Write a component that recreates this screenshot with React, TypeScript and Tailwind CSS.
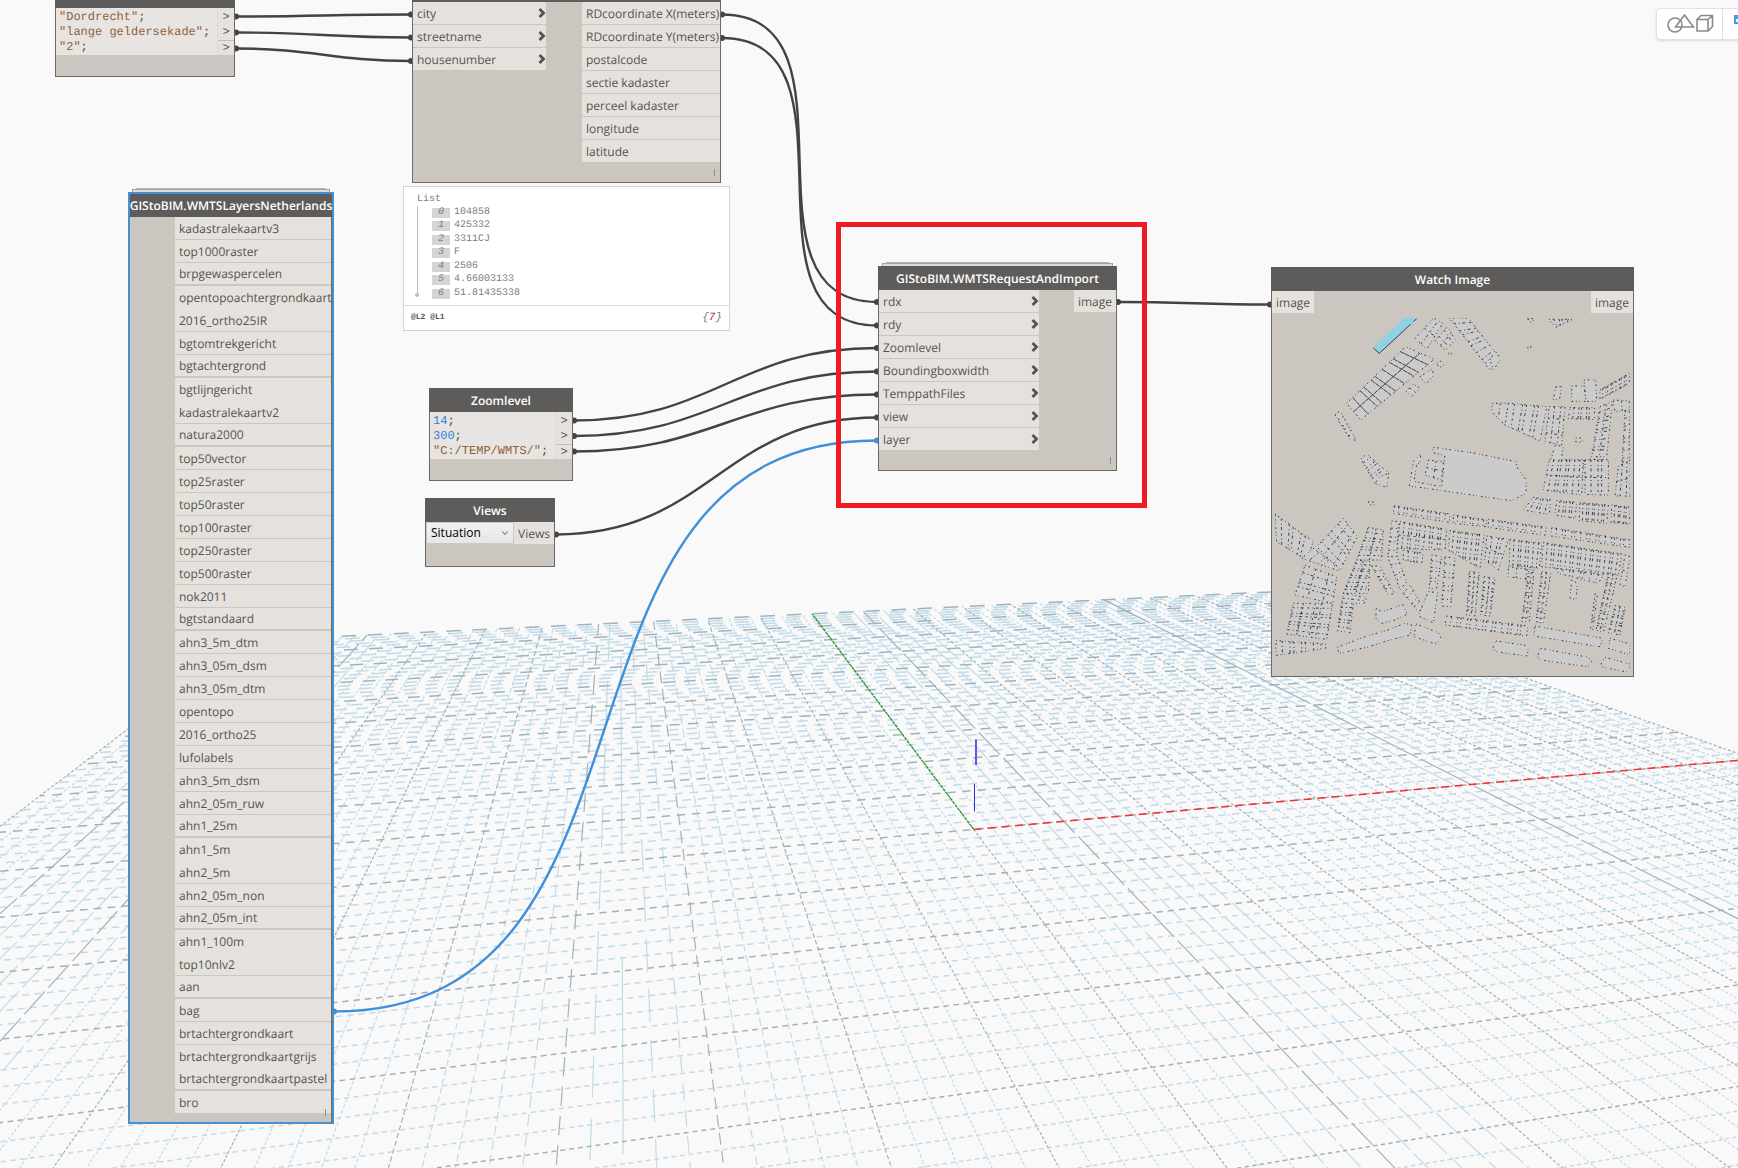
import React from "react";

type Point = [number, number];

/* ---------- Perspective ground grid ---------- */

const HORIZON = 356;

function project(u: number, v: number): Point {
  const w = 1 + 0.017465 * u + 0.08363 * v;
  return [(973.7 + 108.6 * u + 51.81 * v) / w, HORIZON + 473.4 / w];
}

// Nearest v that is still in front of the camera for a given u.
function nearV(u: number) {
  return Math.max(-10, (0.45 - 1 - 0.017465 * u) / 0.08363);
}

function nearU(v: number) {
  return Math.max(-10, (0.45 - 1 - 0.08363 * v) / 0.017465);
}

interface GridLine {
  a: Point;
  b: Point;
  dash: string;
  offset: number;
  width: number;
  major: boolean;
}

function crossLine(v: number, major: boolean): GridLine | null {
  const u0 = nearU(v);
  if (u0 >= 10) return null;
  const a = project(u0, v);
  const b = project(10, v);
  const slope = Math.abs((b[1] - a[1]) / (b[0] - a[0]));
  const period = 1.25 / slope;
  const phase = ((((-a[1] / 1.25) % 1) + 1) % 1) * period;
  return { a, b, dash: `${period * 0.56} ${period * 0.44}`, offset: phase, width: 1.5, major };
}

function depthLine(u: number, major: boolean): GridLine | null {
  const v0 = nearV(u);
  if (v0 >= 10) return null;
  const a = project(u, 10);
  const b = project(u, v0);
  const slope = Math.abs((b[0] - a[0]) / (b[1] - a[1]));
  let period = 5;
  let fill = 0.6;
  if (slope < 0.5) {
    period = Math.min(300, 2.3 / Math.max(slope, 0.004));
    fill = 0.66;
  } else if (Math.abs(slope - 1) < 0.16) {
    period = 36;
    fill = 0.86;
  } else if (Math.abs(slope - 2) < 0.06) {
    period = 60;
    fill = 0.95;
  }
  const phase = (((a[0] / 2.3) % 1) + 1) % 1;
  return { a, b, dash: `${period * fill} ${period * (1 - fill)}`, offset: phase * period, width: 1.2, major };
}

const gridLines: GridLine[] = [];
for (const major of [false, true]) {
  for (let i = -50; i <= 50; i++) {
    if ((i % 5 === 0) !== major) continue;
    for (const line of [crossLine(i / 5, major), depthLine(i / 5, major)]) {
      if (line) gridLines.push(line);
    }
  }
}

function Ground() {
  return (
    <svg className="absolute inset-0 h-full w-full" aria-hidden="true">
      {gridLines.map((l, i) => (
        <line
          key={i}
          x1={l.a[0]}
          y1={l.a[1]}
          x2={l.b[0]}
          y2={l.b[1]}
          stroke={l.major ? "#a3b2ba" : "#c3dbe9"}
          strokeWidth={l.width}
          strokeDasharray={l.dash}
          strokeDashoffset={l.offset}
        />
      ))}
      <line x1="973.7" y1="829.4" x2="812" y2="613.8" stroke="#2f9a2f" strokeWidth="1.3" strokeDasharray="3 1" />
      <line x1="973.7" y1="829.4" x2="1753" y2="759" stroke="#ff2a2a" strokeWidth="1.5" strokeDasharray="8 5.8" />
      <path d="M976 739.500V765" stroke="#5a5af0" strokeWidth="2" />
      <path d="M974.500 784V811.500" stroke="#2a2af0" strokeWidth="1" />
    </svg>
  );
}

/* ---------- Wires ---------- */

const wires: { from: Point; to: Point; blue?: boolean }[] = [
  { from: [236, 16.5], to: [411, 14.5] },
  { from: [236, 32.5], to: [411, 37.5] },
  { from: [236, 48.5], to: [411, 61] },
  { from: [722, 14.5], to: [877, 302] },
  { from: [722, 38], to: [877, 325.5] },
  { from: [574, 420.5], to: [877, 348] },
  { from: [574, 436], to: [877, 371.5] },
  { from: [574, 451.5], to: [877, 394.5] },
  { from: [556, 534.5], to: [877, 417.5] },
  { from: [334, 1011.5], to: [877, 440.5], blue: true },
  { from: [1118, 302], to: [1270, 304.5] },
];

function Wires() {
  return (
    <svg className="absolute inset-0 h-full w-full" aria-hidden="true">
      {wires.map(({ from, to, blue }, i) => {
        const h = 0.45 * Math.hypot(to[0] - from[0], to[1] - from[1]);
        const color = blue ? "#4090d9" : "#444342";
        return (
          <g key={i}>
            <path
              d={`M${from[0]} ${from[1]}C${from[0] + h} ${from[1]} ${to[0] - h} ${to[1]} ${to[0]} ${to[1]}`}
              fill="none"
              stroke={color}
              strokeWidth="2.4"
            />
            <circle cx={from[0]} cy={from[1]} r="3" fill={color} />
            <circle cx={to[0]} cy={to[1]} r="3" fill={color} />
          </g>
        );
      })}
    </svg>
  );
}

/* ---------- Node parts ---------- */

function NodeTitle({ children }: { children?: React.ReactNode }) {
  return (
    <h2 className="flex h-6 items-center justify-center bg-[#5e5c5a] pt-px text-[12px] font-semibold whitespace-nowrap text-white">
      {children}
    </h2>
  );
}

function Stack() {
  return (
    <div className="mx-1">
      <div className="mx-1 h-px bg-[#b4b2ad]" />
      <div className="h-[3px] border border-b-0 border-[#a5a39e] bg-[#e0ddd8]" />
    </div>
  );
}

function Chevron() {
  return (
    <svg width="8" height="10" viewBox="0 0 8 10" aria-hidden="true">
      <path d="M1.500 1l4 4-4 4" fill="none" stroke="#55534f" strokeWidth="2.8" />
    </svg>
  );
}

function InPort({ label }: { label: string }) {
  return (
    <li className="flex h-[22px] items-center justify-between bg-[#e5e2dd] pl-1">
      <span className="pt-0.5">{label}</span>
      <Chevron />
    </li>
  );
}

function OutPort({ label }: { label: string }) {
  return <li className="flex h-[22px] items-center bg-[#e5e2dd] px-1 pt-0.5 whitespace-nowrap">{label}</li>;
}

function Lacing() {
  return <span className="mr-[5px] block h-[7px] w-px self-end bg-[#8b8f92]" />;
}

const nodeBody = "border border-t-0 border-[#6b6965] bg-[#cbc6bf]";

function CodeNode({
  title,
  className,
  lines,
}: {
  title?: string;
  className: string;
  lines: { value: string; tone: string }[];
}) {
  return (
    <section className={`absolute ${className}`}>
      <NodeTitle>{title}</NodeTitle>
      <div className={`flex pb-[21px] ${nodeBody}`}>
        <pre className="grow bg-[#e7e4e1] pt-0.5 pl-[3px] font-['Liberation_Mono',monospace] text-[12px] leading-[15px] text-[#4a4a4a]">
          {lines.map((l) => (
            <div key={l.value}>
              <span className={l.tone}>{l.value}</span>
              <span>;</span>
            </div>
          ))}
        </pre>
        <ul className="w-[17px] border-l border-[#dcd9d4] bg-[#e5e2dd] pt-0.5 font-['Liberation_Mono',monospace] text-[12px]">
          {lines.map((l, i) => (
            <li key={l.value} className={`h-[15px] text-center leading-[15px] ${i === 2 ? "border-t border-[#c3beb7]" : ""}`}>
              &gt;
            </li>
          ))}
        </ul>
      </div>
    </section>
  );
}

/* ---------- Layer list ---------- */

const layers = [
  "kadastralekaartv3", "top1000raster", "brpgewaspercelen", "opentopoachtergrondkaart", "2016_ortho25IR",
  "bgtomtrekgericht", "bgtachtergrond", "bgtlijngericht", "kadastralekaartv2", "natura2000", "top50vector",
  "top25raster", "top50raster", "top100raster", "top250raster", "top500raster", "nok2011", "bgtstandaard",
  "ahn3_5m_dtm", "ahn3_05m_dsm", "ahn3_05m_dtm", "opentopo", "2016_ortho25", "lufolabels", "ahn3_5m_dsm",
  "ahn2_05m_ruw", "ahn1_25m", "ahn1_5m", "ahn2_5m", "ahn2_05m_non", "ahn2_05m_int", "ahn1_100m", "top10nlv2",
  "aan", "bag", "brtachtergrondkaart", "brtachtergrondkaartgrijs", "brtachtergrondkaartpastel", "bro",
];
const joined = new Set(["opentopoachtergrondkaart", "bgtlijngericht", "ahn1_5m", "ahn1_100m", "brtachtergrondkaartgrijs"]);
const wideGap = new Set(["brpgewaspercelen", "bgtachtergrond", "natura2000", "bgtstandaard", "ahn1_25m", "ahn2_05m_int", "aan", "brtachtergrondkaartpastel"]);

function LayersNode() {
  return (
    <section className="absolute top-[188px] left-[128px] w-[206px]">
      <Stack />
      <div className="border-2 border-[#4490d3] bg-[#cbc6bf]">
        <h2 className="flex h-[23px] items-center justify-center bg-[#5e5c5a] text-[12px] font-semibold whitespace-nowrap text-white">
          GIStoBIM.WMTSLayersNetherlands
        </h2>
        <div className="flex flex-col border-r border-[#6b6965] pb-2 pl-[45px]">
          <ul>
            {layers.map((name) => (
              <li
                key={name}
                className={`flex h-[23px] items-center border-[#cbc6bf] bg-[#e5e2dd] pt-px pl-1 whitespace-nowrap ${
                  joined.has(name) ? "" : wideGap.has(name) ? "border-b-2" : "border-b"
                }`}
              >
                {name}
              </li>
            ))}
          </ul>
        </div>
      </div>
      <span className="absolute right-2 bottom-2 h-[7px] w-px bg-[#8b8f92]" />
    </section>
  );
}

/* ---------- Address node and its preview ---------- */

function AddressNode() {
  return (
    <section className="absolute -top-[22px] left-[412px] w-[309px]">
      <NodeTitle />
      <div className={nodeBody}>
        <div className="flex items-start justify-between">
          <ul className="flex w-[133px] flex-col gap-px">
            {["city", "streetname", "housenumber"].map((p) => (
              <InPort key={p} label={p} />
            ))}
          </ul>
          <ul className="flex w-[138px] flex-col gap-px">
            {["RDcoordinate X(meters)", "RDcoordinate Y(meters)", "postalcode", "sectie kadaster", "perceel kadaster", "longitude", "latitude"].map((p) => (
              <OutPort key={p} label={p} />
            ))}
          </ul>
        </div>
        <div className="flex h-5 flex-col justify-center">
          <Lacing />
        </div>
      </div>
    </section>
  );
}

function PreviewPanel() {
  const values = ["104858", "425332", "3311CJ", "F", "2506", "4.66003133", "51.81435338"];
  return (
    <section className="absolute top-[186px] left-[403px] w-[327px] border border-[#d4d4d4] bg-white font-['Liberation_Mono',monospace] text-[10px] text-[#7c7c7c]">
      <div className="px-[13px] pt-[7px] pb-2">
        <h3 className="h-3 text-[10px] leading-3">List</h3>
        <div className="relative flex h-[91px] border-l border-[#bdbdbd] pl-[14px]">
          <span className="absolute bottom-0 -left-[3px] h-[4px] w-[4px] rounded-full bg-[#bdbdbd]" />
          <ol className="flex h-[94px] flex-col justify-between">
            {values.map((v, i) => (
              <li key={v} className="flex h-[13px] items-center gap-1">
                <span className="w-[18px] bg-[#d4d4d4] text-center leading-[10px] italic">{i}</span>
                <span>{v}</span>
              </li>
            ))}
          </ol>
        </div>
      </div>
      <footer className="flex h-[25px] items-center justify-between border-t border-[#dcdcdc] px-[7px]">
        <span className="text-[8px] font-bold text-[#555]">@L2 @L1</span>
        <span className="text-[11px] text-[#777] italic">
          {"{"}
          <b className="font-normal text-[#a02020]">7</b>
          {"}"}
        </span>
      </footer>
    </section>
  );
}

/* ---------- Views and request nodes ---------- */

function ViewsNode() {
  return (
    <section className="absolute top-[498px] left-[425px] w-[130px]">
      <NodeTitle>Views</NodeTitle>
      <div className={`flex pb-[22px] ${nodeBody}`}>
        <div className="relative grow">
          <select
            aria-label="View"
            className="h-[22px] w-full appearance-none border border-[#c9c9c9] bg-linear-to-b from-[#f2f2f2] to-[#e6e6e6] pl-1 text-[12px] text-black"
          >
            <option>Situation</option>
          </select>
          <svg className="pointer-events-none absolute top-[9px] right-[6px]" width="6" height="5" viewBox="0 0 6 5" aria-hidden="true">
            <path d="M0.5 0.5L3 3.5 5.5 0.5" fill="none" stroke="#555" />
          </svg>
        </div>
        <ul className="w-10">
          <OutPort label="Views" />
        </ul>
      </div>
    </section>
  );
}

function RequestNode() {
  return (
    <section className="absolute top-[262px] left-[878px] w-[239px]">
      <Stack />
      <NodeTitle>GIStoBIM.WMTSRequestAndImport</NodeTitle>
      <div className={nodeBody}>
        <div className="flex items-start justify-between">
          <ul className="flex w-[160px] flex-col gap-px">
            {["rdx", "rdy", "Zoomlevel", "Boundingboxwidth", "TemppathFiles", "view", "layer"].map((p) => (
              <InPort key={p} label={p} />
            ))}
          </ul>
          <ul>
            <OutPort label="image" />
          </ul>
        </div>
        <div className="flex h-5 flex-col justify-center">
          <Lacing />
        </div>
      </div>
    </section>
  );
}

/* ---------- Building footprint map ---------- */

interface Block {
  p: number[];
  nx?: number;
  ny?: number;
}

const blocks: Block[] = [
  { p: [260, 430, 437, 260, 522, 298, 302, 480], nx: 10, ny: 2 },
  { p: [465, 235, 522, 174, 548, 190, 500, 268], nx: 2, ny: 2 },
  { p: [525, 242, 562, 200, 586, 240, 556, 270], nx: 3, ny: 2 },
  { p: [568, 174, 625, 174, 720, 295, 690, 330], ny: 9 },
  { p: [690, 300, 705, 272, 722, 298, 700, 330] },
  { p: [438, 395, 460, 372, 480, 385, 455, 408], nx: 2 },
  { p: [480, 350, 515, 328, 522, 345, 498, 372] },
  { p: [530, 310, 542, 303, 550, 315, 538, 323] },
  { p: [565, 280, 572, 276, 576, 282, 569, 287] },
  { p: [225, 465, 240, 452, 288, 540, 272, 540], ny: 5 },
  { p: [803, 176, 825, 176, 818, 184, 810, 186] },
  { p: [867, 178, 938, 178, 910, 192, 886, 202], nx: 5 },
  { p: [802, 262, 812, 258, 813, 265, 806, 268] },
  { p: [888, 380, 905, 380, 898, 420, 880, 418] },
  { p: [935, 378, 972, 378, 978, 424, 935, 424] },
  { p: [972, 360, 1007, 360, 1010, 424, 978, 424] },
  { p: [1020, 390, 1108, 340, 1108, 370, 1020, 418], nx: 11 },
  { p: [697, 430, 745, 430, 735, 495, 695, 455], nx: 2 },
  { p: [745, 430, 860, 440, 840, 543, 735, 495], nx: 6 },
  { p: [868, 440, 915, 440, 905, 555, 855, 545], nx: 3, ny: 3 },
  { p: [930, 443, 1003, 443, 1003, 478, 925, 476], nx: 6 },
  { p: [1020, 440, 1057, 425, 1040, 590, 995, 590], nx: 2, ny: 9 },
  { p: [1060, 420, 1108, 423, 1108, 450, 1065, 455], nx: 2 },
  { p: [1095, 455, 1108, 455, 1108, 628, 1085, 628], ny: 9 },
  { p: [947, 534, 967, 534, 965, 547, 947, 545] },
  { p: [885, 555, 910, 560, 900, 625, 870, 610] },
  { p: [915, 600, 985, 600, 980, 630, 910, 625], nx: 5 },
  { p: [990, 598, 1045, 600, 1045, 625, 985, 625], nx: 4 },
  { p: [303, 597, 320, 582, 386, 640, 345, 670], ny: 6 },
  { p: [386, 640, 380, 682, 345, 670, 360, 650] },
  { p: [325, 725, 345, 727, 340, 736, 328, 733] },
  { p: [520, 562, 635, 578, 768, 605, 770, 620, 798, 660, 798, 700, 755, 722, 670, 710, 500, 685, 448, 678, 460, 605, 482, 582, 480, 610, 470, 612, 462, 665, 545, 680, 555, 585, 518, 578] },
  { p: [505, 600, 550, 605, 545, 660, 495, 645], nx: 2, ny: 2 },
  { p: [403, 738, 570, 762, 568, 787, 400, 760], nx: 12 },
  { p: [580, 765, 680, 780, 678, 800, 580, 790], nx: 8 },
  { p: [685, 778, 858, 802, 855, 826, 685, 802], nx: 12 },
  { p: [875, 803, 1110, 840, 1108, 862, 873, 828], nx: 16 },
  { p: [820, 712, 872, 720, 868, 763, 790, 750], nx: 5 },
  { p: [890, 722, 950, 727, 945, 775, 885, 765], nx: 6 },
  { p: [960, 728, 1045, 735, 1040, 790, 958, 782], nx: 9 },
  { p: [1055, 735, 1110, 742, 1108, 792, 1053, 787], nx: 6 },
  { p: [868, 600, 970, 600, 965, 705, 850, 690], nx: 8, ny: 2 },
  { p: [975, 600, 1045, 600, 1045, 705, 975, 703], nx: 4, ny: 2 },
  { p: [1075, 620, 1110, 600, 1110, 708, 1065, 708], nx: 3, ny: 2 },
  { p: [45, 762, 160, 845, 140, 900, 50, 845], nx: 6 },
  { p: [250, 775, 292, 830, 240, 930, 170, 860], nx: 3, ny: 5 },
  { p: [160, 865, 240, 925, 236, 932, 125, 895], nx: 5 },
  { p: [135, 916, 230, 950, 218, 1030, 105, 1005], nx: 3, ny: 4 },
  { p: [100, 1030, 218, 1030, 200, 1138, 80, 1122], nx: 4, ny: 7 },
  { p: [48, 1142, 197, 1152, 197, 1165, 48, 1186], nx: 8 },
  { p: [325, 802, 370, 810, 365, 900, 290, 900], nx: 2, ny: 7 },
  { p: [290, 900, 330, 905, 325, 1000, 250, 1000], nx: 2, ny: 9 },
  { p: [250, 1000, 320, 1014, 312, 1030, 245, 1030], ny: 2 },
  { p: [245, 1030, 280, 1030, 270, 1118, 232, 1112], ny: 7 },
  { p: [335, 918, 360, 918, 403, 1000, 385, 1005], ny: 6 },
  { p: [395, 783, 415, 785, 410, 890, 383, 890], ny: 5 },
  { p: [383, 890, 412, 890, 440, 965, 420, 990], ny: 4 },
  { p: [430, 1000, 450, 975, 490, 1045, 475, 1055], ny: 4 },
  { p: [420, 785, 560, 808, 555, 870, 412, 865], nx: 11, ny: 2 },
  { p: [430, 870, 490, 880, 485, 910, 430, 900], nx: 4 },
  { p: [515, 885, 545, 890, 530, 985, 508, 985], ny: 6 },
  { p: [505, 995, 533, 998, 520, 1088, 475, 1068] },
  { p: [570, 812, 672, 825, 660, 925, 565, 870], nx: 9 },
  { p: [555, 890, 585, 895, 572, 1040, 545, 1038], ny: 7 },
  { p: [628, 935, 658, 938, 645, 1068, 620, 1065], nx: 2, ny: 9 },
  { p: [672, 950, 705, 955, 690, 1068, 662, 1065], nx: 2, ny: 8 },
  { p: [680, 828, 745, 838, 715, 930, 675, 900], nx: 4, ny: 2 },
  { p: [750, 838, 845, 850, 838, 925, 748, 915], nx: 8 },
  { p: [745, 920, 820, 930, 815, 960, 745, 950], nx: 3 },
  { p: [805, 935, 822, 938, 808, 1085, 785, 1085], nx: 2, ny: 10 },
  { p: [850, 848, 1085, 882, 1075, 945, 845, 920], nx: 20 },
  { p: [890, 925, 1030, 945, 1015, 970, 895, 940], nx: 8 },
  { p: [845, 935, 872, 940, 850, 1090, 828, 1085], nx: 2, ny: 10 },
  { p: [935, 960, 952, 970, 948, 1018, 930, 1015] },
  { p: [1045, 940, 1072, 945, 1030, 1118, 1008, 1110], nx: 2, ny: 14 },
  { p: [1095, 885, 1110, 890, 1095, 980, 1080, 975], ny: 2 },
  { p: [1065, 1037, 1095, 1042, 1080, 1125, 1045, 1118], nx: 2, ny: 7 },
  { p: [1005, 1000, 1012, 1005, 998, 1110, 992, 1105], ny: 6 },
  { p: [348, 1045, 365, 1056, 428, 1034, 442, 1062, 405, 1080, 365, 1090, 348, 1076] },
  { p: [232, 1162, 310, 1132, 390, 1108, 435, 1090, 455, 1095, 450, 1125, 390, 1140, 320, 1162, 237, 1180] },
  { p: [468, 1092, 535, 1118, 542, 1132, 530, 1150, 515, 1148, 462, 1130] },
  { p: [560, 1068, 803, 1098, 800, 1128, 555, 1095], nx: 16 },
  { p: [825, 1098, 1028, 1135, 1020, 1160, 1005, 1158, 822, 1128] },
  { p: [708, 1143, 795, 1156, 805, 1170, 800, 1188, 708, 1175, 698, 1165] },
  { p: [842, 1165, 985, 1192, 995, 1205, 982, 1220, 842, 1200, 832, 1190] },
  { p: [1050, 1135, 1110, 1152, 1110, 1185, 1045, 1165] },
  { p: [1035, 1192, 1110, 1212, 1110, 1238, 1030, 1222, 1023, 1212] },
];

function divisions({ p, nx = 1, ny = 1 }: Block): string {
  const [ax, ay, bx, by, cx, cy, dx, dy] = p;
  const mix = (m: number, n: number, t: number) => Math.round(m + (n - m) * t);
  // Uneven plot widths: each boundary leans a little off the regular spacing.
  const lean = (i: number, n: number) => (i + (((i * 7) % 5) - 2) * 0.12) / n;
  let d = "";
  for (let i = 1; i < nx; i++) {
    const t = lean(i, nx);
    d += `M${mix(ax, bx, t)} ${mix(ay, by, t)}L${mix(dx, cx, t)} ${mix(dy, cy, t)}`;
  }
  for (let i = 1; i < ny; i++) {
    const t = lean(i, ny);
    d += `M${mix(ax, dx, t)} ${mix(ay, dy, t)}L${mix(bx, cx, t)} ${mix(by, cy, t)}`;
  }
  return d;
}

function FootprintMap() {
  return (
    <svg viewBox="45 174 1065 1062" className="block w-full" role="img" aria-label="Building footprints">
      {blocks.map((b, i) => (
        <g key={i} stroke="#1f1d1c">
          <polygon points={b.p.join(" ")} fill="#cbcbcb" strokeWidth="2.6" strokeDasharray="3 8 5 12 2 7" />
          <path d={divisions(b)} fill="none" strokeDasharray={i === 0 ? "14 2" : "6 9 3 7 9 11"} strokeWidth="2.4" />
        </g>
      ))}
      <path d="M340 262L432 174H472L358 280Z" fill="#92d0e3" />
      <path d="M470 176L358 280L340 264" fill="none" stroke="#33414a" strokeWidth="3" />
      <path d="M448 190l12-6 4 14-8-2z" fill="#92d0e3" />
    </svg>
  );
}

function WatchImageNode() {
  return (
    <section className="absolute top-[267px] left-[1271px] w-[363px]">
      <NodeTitle>Watch Image</NodeTitle>
      <div className={nodeBody}>
        <ul className="flex justify-between">
          <OutPort label="image" />
          <OutPort label="image" />
        </ul>
        <div className="px-[3px] pt-[5px] pb-1">
          <FootprintMap />
        </div>
      </div>
    </section>
  );
}

/* ---------- View toggle ---------- */

function ViewToggle() {
  return (
    <div className="absolute top-2 -right-[18px] flex h-8 rounded-sm border border-[#e2e2e2] bg-white shadow-sm">
      <button type="button" aria-label="Geometry view" className="flex w-[66px] items-center justify-center border-r border-[#dedede]">
        <svg width="48" height="20" viewBox="0 0 48 20" fill="none" stroke="#8a8a8a" strokeWidth="1.6" aria-hidden="true">
          <circle cx="9" cy="11" r="7" />
          <path d="M18.500 1L9.500 13H27.500Z" />
          <path d="M31 5.500H42V17H31ZM31 5.500L35 1.500H46.500V12.500L42 17M42 5.500L46.500 1.500" />
        </svg>
      </button>
      <button type="button" aria-label="Graph view" className="flex w-8 items-start pt-[6px] pl-[11px]">
        <svg width="20" height="18" viewBox="0 0 20 18" fill="none" stroke="#3f9df0" strokeWidth="2" aria-hidden="true">
          <path d="M1 1H9V8H1ZM1 3H9M9 5H18" />
        </svg>
      </button>
    </div>
  );
}

export default function App() {
  return (
    <main className="relative h-screen overflow-hidden bg-[#f9f9f9] font-['Open_Sans',sans-serif] text-[12px] leading-4 text-[#555350] [text-rendering:geometricPrecision]">
      <Ground />
      <Wires />
      <CodeNode
        className="-top-4 left-[55px] w-[180px]"
        lines={[
          { value: '"Dordrecht"', tone: "text-[#8f5f3a]" },
          { value: '"lange geldersekade"', tone: "text-[#8f5f3a]" },
          { value: '"2"', tone: "text-[#8f5f3a]" },
        ]}
      />
      <AddressNode />
      <PreviewPanel />
      <LayersNode />
      <CodeNode
        title="Zoomlevel"
        className="top-[388px] left-[429px] w-[144px]"
        lines={[
          { value: "14", tone: "text-[#2f83dc]" },
          { value: "300", tone: "text-[#2f83dc]" },
          { value: '"C:/TEMP/WMTS/"', tone: "text-[#8f5f3a]" },
        ]}
      />
      <ViewsNode />
      <RequestNode />
      <WatchImageNode />
      <div className="pointer-events-none absolute top-[222px] left-[836px] h-[286px] w-[311px] border-5 border-[#ee1b24]" />
      <ViewToggle />
    </main>
  );
}
